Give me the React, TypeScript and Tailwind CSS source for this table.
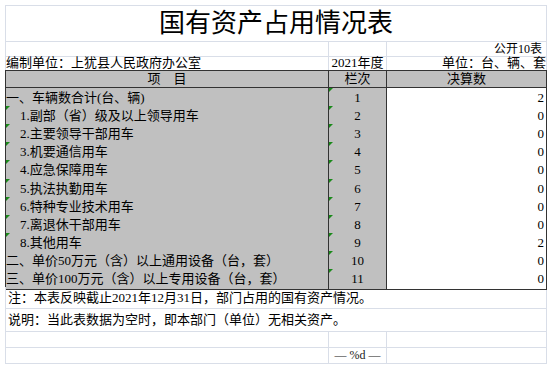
import React from "react";

const rows = [
  { label: "一、车辆数合计(台、辆)", indent: false, no: 1, val: 2, mark: false, h: "h-[18px]" },
  { label: "1.副部（省）级及以上领导用车", indent: true, no: 2, val: 0, mark: true, h: "h-[18px]" },
  { label: "2.主要领导干部用车", indent: true, no: 3, val: 0, mark: true, h: "h-[18px]" },
  { label: "3.机要通信用车", indent: true, no: 4, val: 0, mark: true, h: "h-[18px]" },
  { label: "4.应急保障用车", indent: true, no: 5, val: 0, mark: true, h: "h-[19px]" },
  { label: "5.执法执勤用车", indent: true, no: 6, val: 0, mark: true, h: "h-[18px]" },
  { label: "6.特种专业技术用车", indent: true, no: 7, val: 0, mark: true, h: "h-[18px]" },
  { label: "7.离退休干部用车", indent: true, no: 8, val: 0, mark: true, h: "h-[18px]" },
  { label: "8.其他用车", indent: true, no: 9, val: 2, mark: true, h: "h-[18px]" },
  { label: "二、单价50万元（含）以上通用设备（台，套）", indent: false, no: 10, val: 0, mark: false, h: "h-[18px]" },
  { label: "三、单价100万元（含）以上专用设备（台，套）", indent: false, no: 11, val: 0, mark: false, h: "h-[18px]" },
];

function Mark() {
  return (
    <span className="absolute left-0 top-0 w-0 h-0 border-t-[4px] border-t-[#1a8a1a] border-r-[4px] border-r-transparent" />
  );
}

export default function App() {
  return (
    <div className="w-[552px] h-[369px] bg-white text-black pt-[5px] pl-[5px] font-['Liberation_Serif','Noto_Sans_CJK_SC',serif] overflow-hidden">
      <div className="w-[542px]">
        {/* title */}
        <div className="h-[37px] border border-[#d9dee8] flex items-center justify-center text-[26px] leading-none">
          国有资产占用情况表
        </div>
        {/* row 2 */}
        <div className="grid grid-cols-[323px_58px_160px] h-[14px] border-l border-[#d9dee8] text-[12px] leading-[14px]">
          <div className="border-r border-b border-[#d9dee8]" />
          <div className="border-r border-b border-[#d9dee8]" />
          <div className="border-r border-b border-[#d9dee8] text-right pr-[4px] whitespace-nowrap">公开10表</div>
        </div>
        {/* row 3 */}
        <div className="grid grid-cols-[323px_58px_160px] h-[14px] border-l border-[#d9dee8] text-[13px] leading-[14px]">
          <div className="border-r border-[#d9dee8] whitespace-nowrap">编制单位：上犹县人民政府办公室</div>
          <div className="border-r border-[#d9dee8] text-center whitespace-nowrap">2021年度</div>
          <div className="border-r border-[#d9dee8] text-right whitespace-nowrap overflow-hidden">单位：台、辆、套</div>
        </div>
        {/* table */}
        <div className="border-l border-t border-[#333]">
          <div className="grid grid-cols-[323px_58px_160px] h-[17px] bg-[#c0c0c0] text-[13px] leading-[16px]">
            <div className="border-r border-b border-[#333] text-center">项　目</div>
            <div className="border-r border-b border-[#333] text-center">栏次</div>
            <div className="border-r border-b border-[#333] text-center">决算数</div>
          </div>
          {rows.map((r) => (
            <div key={r.no} className={`grid grid-cols-[323px_58px_160px] ${r.h} text-[13px]`}>
              <div
                className={`relative bg-[#c0c0c0] border-r border-b border-[#333] flex items-center whitespace-nowrap ${
                  r.indent ? "pl-[14px]" : "pl-0"
                }`}
              >
                {r.mark && <Mark />}
                {r.label}
              </div>
              <div className="relative bg-[#c0c0c0] border-r border-b border-[#333] flex items-center justify-center">
                <Mark />
                {r.no}
              </div>
              <div className="bg-white border-r border-b border-[#333] flex items-center justify-end pr-[2px]">
                {r.val}
              </div>
            </div>
          ))}
        </div>
        {/* notes */}
        <div className="h-[22px] border-x border-b border-[#d9dee8] flex items-center pl-[2px] text-[13px] whitespace-nowrap">
          注：本表反映截止2021年12月31日，部门占用的国有资产情况。
        </div>
        <div className="h-[23px] border-x border-b border-[#d9dee8] flex items-center pl-[2px] text-[13px] whitespace-nowrap">
          说明：当此表数据为空时，即本部门（单位）无相关资产。
        </div>
        <div className="grid grid-cols-[323px_58px_160px] h-[16px] border-l border-[#d9dee8]">
          <div className="border-r border-b border-[#d9dee8]" />
          <div className="border-r border-b border-[#d9dee8]" />
          <div className="border-r border-b border-[#d9dee8]" />
        </div>
        <div className="grid grid-cols-[323px_58px_160px] h-[16px] border-l border-[#d9dee8] text-[12px] leading-[15px]">
          <div className="border-r border-b border-[#d9dee8]" />
          <div className="border-r border-b border-[#d9dee8] text-center text-[#222] whitespace-nowrap">— %d —</div>
          <div className="border-r border-b border-[#d9dee8]" />
        </div>
      </div>
    </div>
  );
}
